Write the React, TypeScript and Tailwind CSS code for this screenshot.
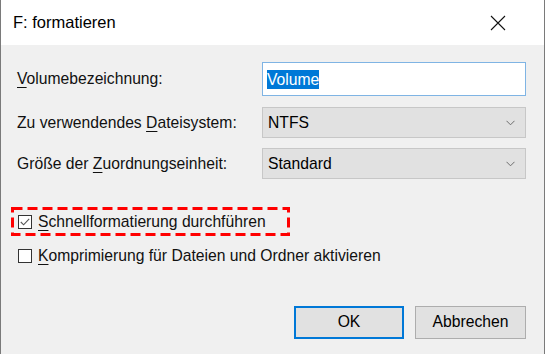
import type { ReactNode } from "react";

const font = { fontFamily: '"Liberation Sans", Arial, sans-serif' };

function U({ children }: { children: ReactNode }) {
  return <span className="underline decoration-1 underline-offset-[3px]">{children}</span>;
}

function Chevron() {
  return (
    <svg width="9" height="6" viewBox="0 0 9 6" className="shrink-0">
      <path d="M0.5 0.8 L4.5 4.8 L8.5 0.8" fill="none" stroke="#6d6d6d" strokeWidth="1" />
    </svg>
  );
}

function Select({ value }: { value: string }) {
  return (
    <div className="flex h-[31px] w-[264px] items-center justify-between border border-[#c7c7c7] bg-[#e1e1e1] pl-[5px] pr-[10px] text-[15.7px] text-black">
      <span>{value}</span>
      <Chevron />
    </div>
  );
}

function Checkbox({ checked }: { checked?: boolean }) {
  return (
    <div className="flex h-[14px] w-[14px] shrink-0 items-center justify-center border border-[#333333] bg-white">
      {checked && (
        <svg width="10" height="8" viewBox="0 0 10 8">
          <path d="M0.8 4 L3.6 6.8 L9.2 0.8" fill="none" stroke="#555555" strokeWidth="1.1" />
        </svg>
      )}
    </div>
  );
}

export default function App() {
  return (
    <div
      className="flex h-[354px] w-[545px] flex-col border-l border-r border-[#7a7a7a] bg-[#f0f0f0] text-black"
      style={font}
    >
      <div className="flex h-[45px] shrink-0 items-center justify-between bg-white pl-[12px] pr-[38px]">
        <span className="text-[16.5px]">F: formatieren</span>
        <svg width="16" height="16" viewBox="0 0 16 16">
          <path d="M1 1 L15 15 M15 1 L1 15" stroke="#111" strokeWidth="1.1" />
        </svg>
      </div>

      <div className="flex flex-1 flex-col pt-[17px] text-[15.7px] text-[#111]">
        <div className="grid grid-cols-[245px_264px] items-center gap-y-[11px] pl-[16px]">
          <span>
            <U>V</U>olumebezeichnung:
          </span>
          <div className="flex h-[34px] w-[264px] items-center border border-[#7fb4e4] bg-white pl-[4px]">
            <span className="bg-[#0078d7] leading-[19px] text-white">Volume</span>
          </div>
          <span>
            Zu verwendendes <U>D</U>ateisystem:
          </span>
          <Select value="NTFS" />
          <span className="-mt-[1px]">
            Größe der <U>Z</U>uordnungseinheit:
          </span>
          <div className="-mt-[1px]">
            <Select value="Standard" />
          </div>
        </div>

        <div className="relative ml-[10px] mt-[28px] flex h-[29px] w-[279px] items-center gap-[6px] pl-[7px]">
          <svg className="absolute inset-0" width="279" height="29">
            <rect
              x="1.5"
              y="1.5"
              width="276"
              height="26"
              fill="none"
              stroke="#ff0000"
              strokeWidth="3"
              strokeDasharray="10 5"
            />
          </svg>
          <Checkbox checked />
          <span>
            <U>S</U>chnellformatierung durchführen
          </span>
        </div>

        <div className="ml-[17px] mt-[8px] flex items-center gap-[6px]">
          <Checkbox />
          <span>
            <U>K</U>omprimierung für Dateien und Ordner aktivieren
          </span>
        </div>

        <div className="mt-[38px] flex justify-end gap-[11px] pr-[18px]">
          <button className="h-[33px] w-[110px] border border-[#0078d7] bg-[#e1e1e1] text-[15.7px] text-black shadow-[inset_0_0_0_1px_#0078d7]">
            OK
          </button>
          <button className="h-[33px] w-[111px] border border-[#adadad] bg-[#e1e1e1] text-[15.7px] text-black">
            Abbrechen
          </button>
        </div>
      </div>
    </div>
  );
}
